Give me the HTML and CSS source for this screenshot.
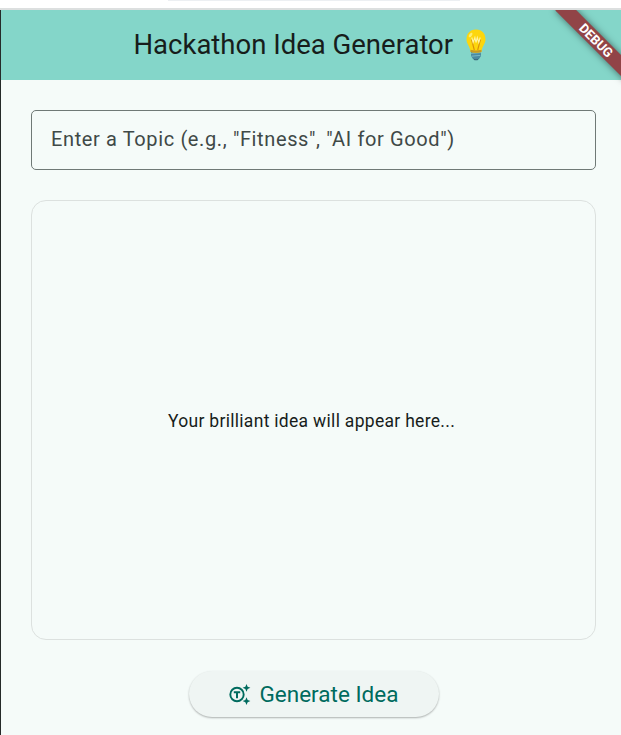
FILE: index.html
```html
<!DOCTYPE html>
<html lang="en">
<head>
<meta charset="utf-8">
<title>Hackathon Idea Generator</title>
<link rel="stylesheet" href="styles.css">
</head>
<body>
<div class="window">
  <div class="chrome"><div class="chrome-tab"></div></div>
  <div class="app">
    <header class="app-bar">
      <h1 class="title">Hackathon Idea Generator</h1>
      <svg class="bulb" width="24" height="32" viewBox="0 0 24 32" aria-hidden="true">
        <path d="M7 23h10v4l-2 3-3 1-3-1-2-3z" fill="#4b8ba0"/>
        <path d="M7 24.4l10-.8M7.4 27.2l9-.8" stroke="#79b9c6" stroke-width="1"/>
        <path d="M9 29.5q3 1.5 6 0l-1.5 1.7h-3z" fill="#376477"/>
        <path d="M12 .5C5.6.5 2.500 4.900 2.500 10.500c0 4.500 3.500 6.500 4.100 12.500q5.400 1.500 10.800 0C18 17 21.500 15 21.500 10.500 21.500 4.900 18.400.5 12 .5z" fill="#fdd60d"/>
        <path d="M6.500 20.700q5.500 1.500 11 0v2.300q-5.500 1.500-11 0z" fill="#c79a25"/>
        <path d="M10.300 21L7.600 10.500M13.700 21l2.700-10.500" fill="none" stroke="#d98f0a" stroke-width="1.100"/>
        <path d="M7.800 8.500l1.300 5 1.800-5 1.100 5 1.300-5 1.500 5 1.400-5" fill="none" stroke="#fff3a0" stroke-width="1.100"/>
        <ellipse cx="6.600" cy="6" rx="1.400" ry="2.600" transform="rotate(35 6.600 6)" fill="#ffee70"/>
      </svg>
    </header>
    <main class="content">
      <div class="field">Enter a Topic (e.g., "Fitness", "AI for Good")</div>
      <section class="result"><p class="message">Your brilliant idea will appear here...</p></section>
      <button class="generate" type="button">
        <svg class="icon" width="23" height="23" viewBox="0 0 23 23" aria-hidden="true">
          <circle cx="9" cy="11.500" r="6.700" fill="none" stroke="currentColor" stroke-width="1.900"/>
          <path d="M5.800 8.300h6.400v2H10v5H8v-5H5.800z" fill="currentColor"/>
          <path d="M18.500 .9l1.150 2.750 2.750 1.150-2.750 1.150-1.150 2.750-1.150-2.750-2.750-1.150 2.750-1.150zM18.500 14.200l1.150 2.750 2.750 1.150-2.750 1.150-1.150 2.750-1.150-2.750-2.750-1.150 2.750-1.150z" fill="currentColor" stroke="#eff5f3" stroke-width="1.200" paint-order="stroke"/>
        </svg>
        <span>Generate Idea</span>
      </button>
    </main>
    <div class="debug">DEBUG</div>
  </div>
</div>
</body>
</html>
```
FILE: styles.css
```css
* {
  box-sizing: border-box;
}

body {
  margin: 0;
  font-family: Roboto, sans-serif;
}

.window {
  height: 735px;
  display: flex;
  flex-direction: column;
  overflow: hidden;
}

.chrome {
  height: 10px;
  flex: none;
  background: #fff;
  border-bottom: 2px solid #dcdfdf;
}

.chrome-tab {
  width: 292px;
  height: 1px;
  margin-left: 168px;
  background: #eceff2;
}

.app {
  position: relative;
  flex: 1;
  overflow: hidden;
  border-left: 1px solid #252a29;
  background: #f5fbf9;
}

.app-bar {
  height: 70px;
  display: flex;
  align-items: center;
  padding-left: 132.5px;
  background: #84d6c9;
}

.title {
  margin: 0;
  padding-bottom: 2px;
  color: #171d1b;
  font-size: 27.5px;
  font-weight: 400;
  line-height: 35px;
  white-space: nowrap;
}

.bulb {
  margin-left: 11px;
}

.content {
  display: flex;
  flex-direction: column;
  gap: 30px;
  padding: 30px 25px 0 30px;
}

.field {
  height: 60px;
  padding-left: 19px;
  border: 1px solid #6f7976;
  border-radius: 5px;
  color: #3f4947;
  font-size: 20px;
  line-height: 57px;
  letter-spacing: 0.625px;
  white-space: nowrap;
}

.result {
  height: 440px;
  display: flex;
  align-items: center;
  justify-content: center;
  padding: 2px 4px 0 0;
  border: 1px solid #dce1df;
  border-radius: 15px;
}

.message {
  margin: 0;
  color: #171d1b;
  font-size: 17.5px;
  line-height: 25px;
  letter-spacing: 0.3px;
}

.generate {
  width: 250px;
  height: 46px;
  display: flex;
  align-items: center;
  align-self: center;
  gap: 9px;
  margin-top: 1px;
  padding: 0 0 0 39px;
  border: 0;
  border-radius: 23px;
  background: #eff5f3;
  box-shadow: 0 1px 2px rgba(0, 0, 0, 0.3);
  color: #006b5e;
  font-family: inherit;
  font-size: 22.5px;
  letter-spacing: 0;
  white-space: nowrap;
}

.icon {
  flex: none;
}

.debug {
  position: absolute;
  top: 22.5px;
  right: -25px;
  width: 100px;
  height: 15px;
  transform: rotate(45deg);
  background: #914447;
  box-shadow: 0 0 7px rgba(0, 0, 0, 0.5);
  color: #fff;
  font-size: 13px;
  font-weight: 700;
  line-height: 15px;
  text-align: center;
}
```
